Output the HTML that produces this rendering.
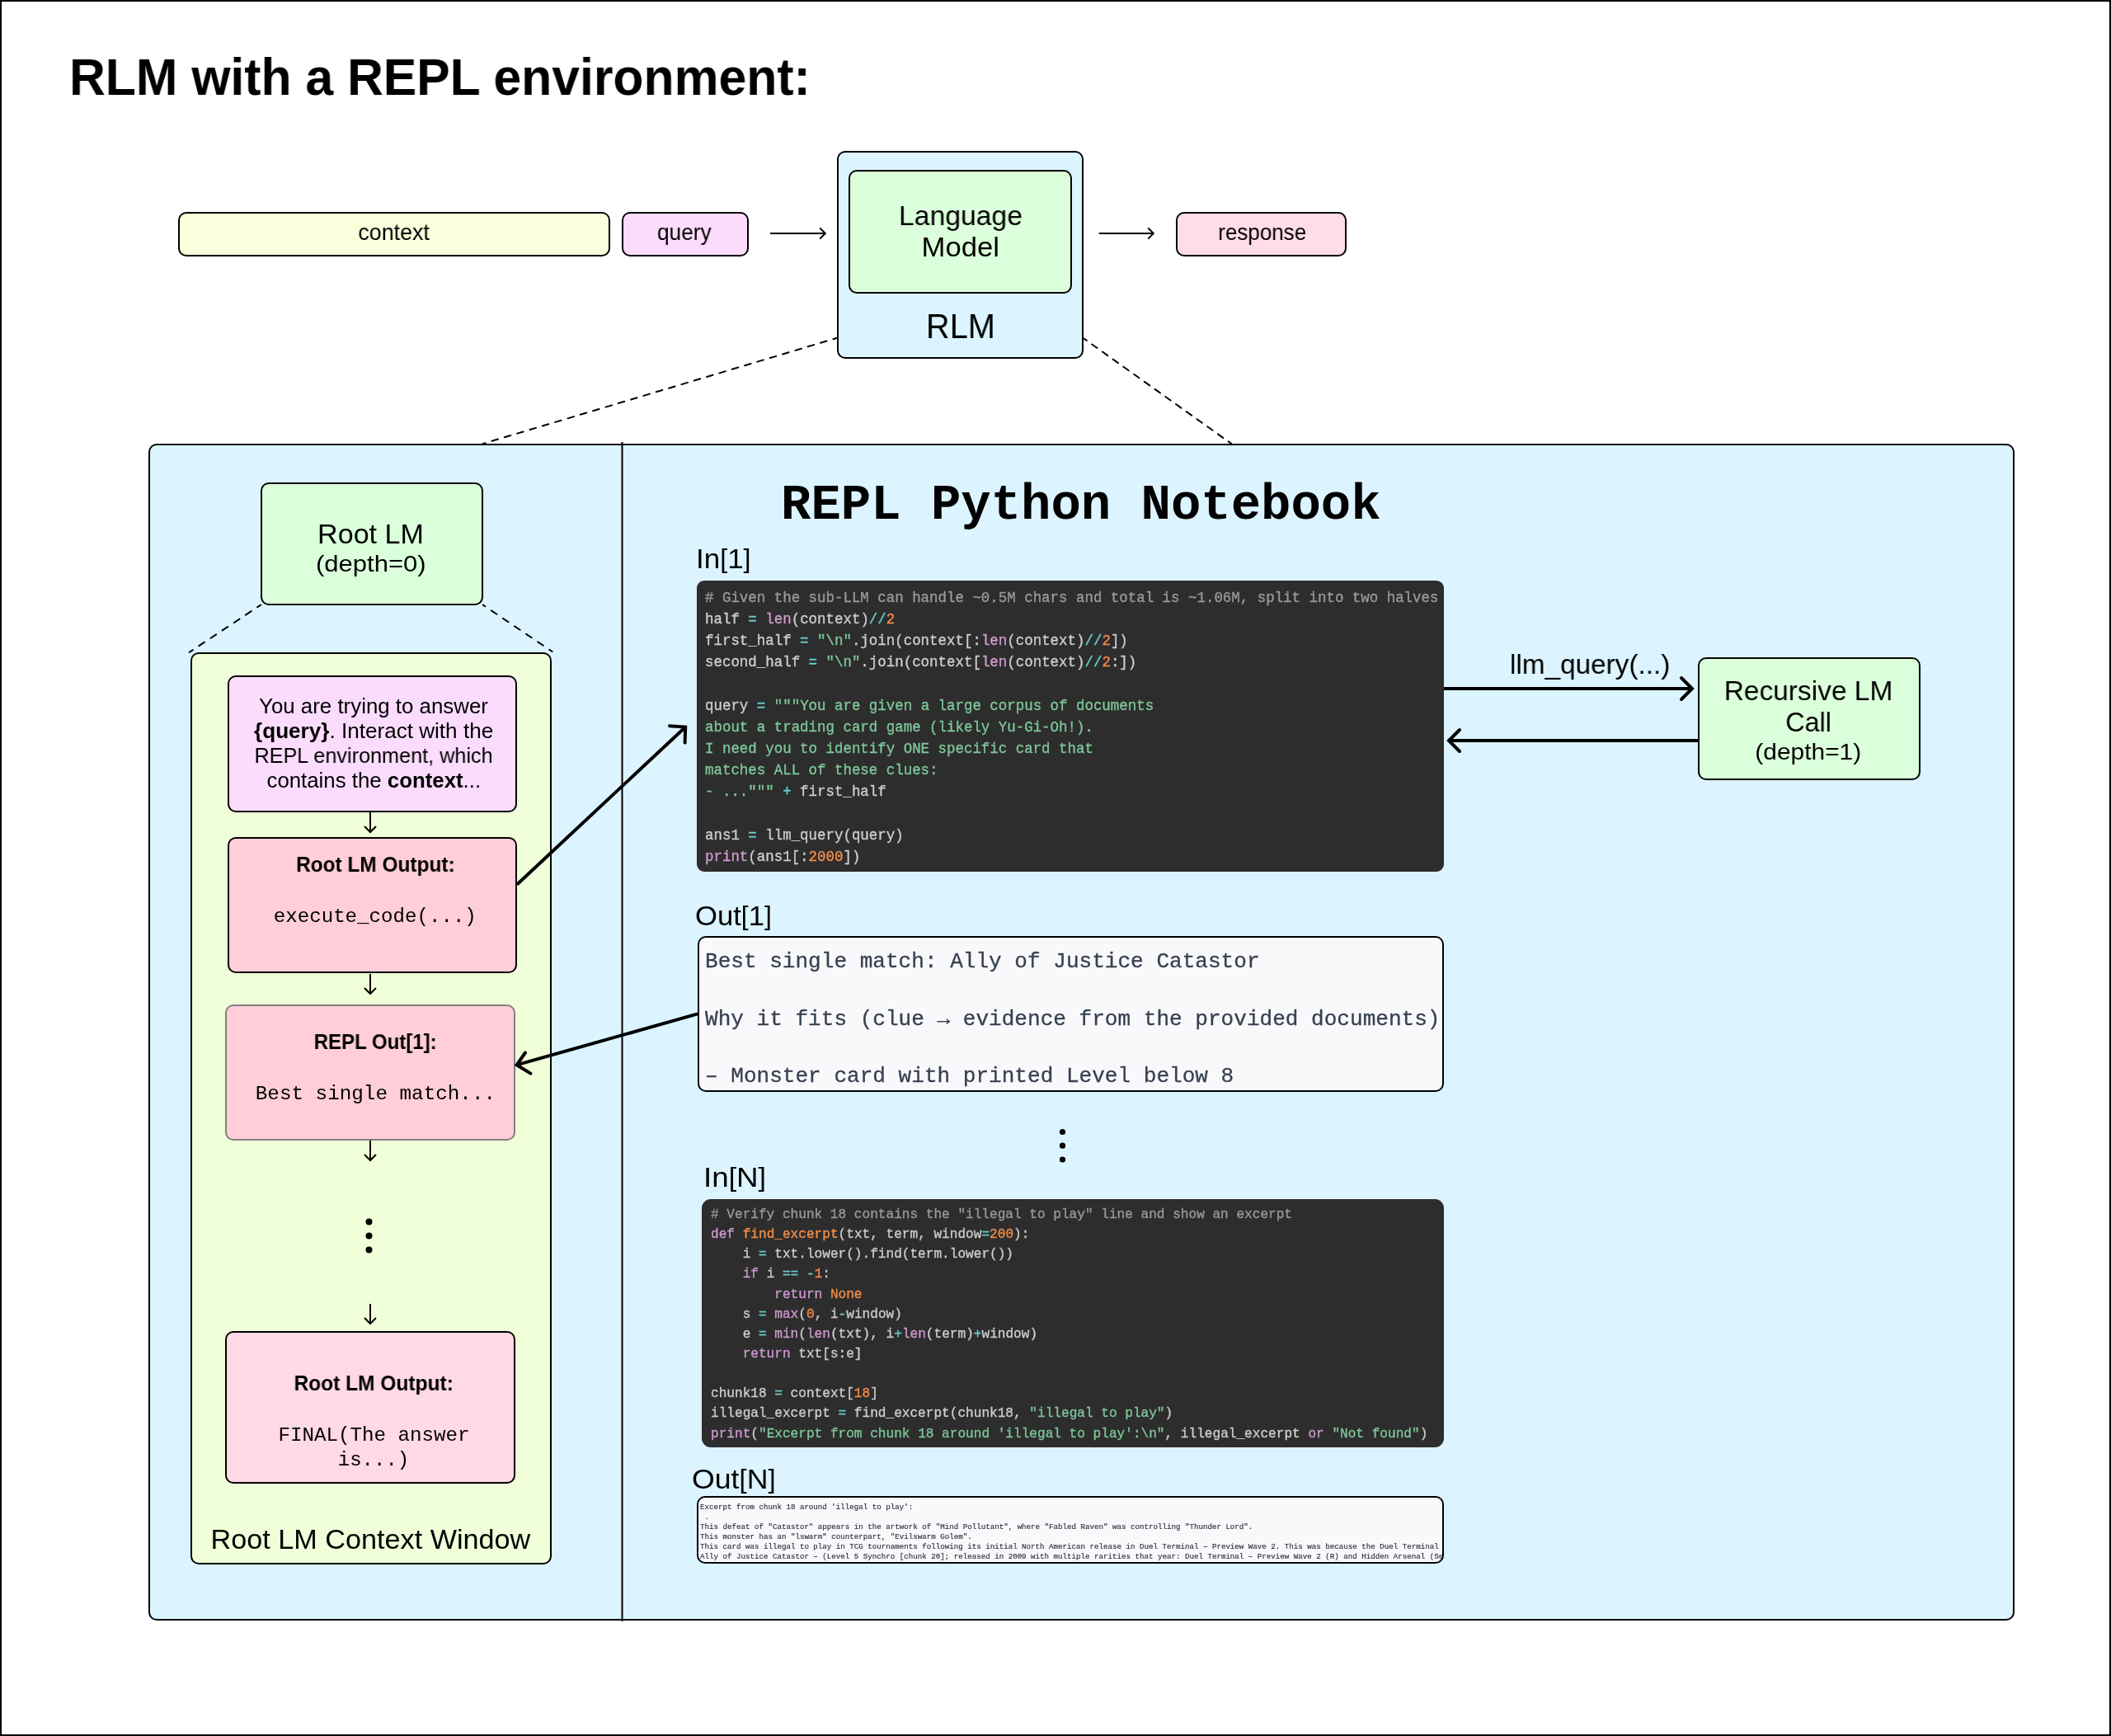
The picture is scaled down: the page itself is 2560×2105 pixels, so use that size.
<!DOCTYPE html>
<html>
<head>
<meta charset="utf-8">
<title>RLM with a REPL environment</title>
<style>
  html, body { margin: 0; padding: 0; }
  body {
    width: 2560px; height: 2105px; position: relative; overflow: hidden;
    background: #ffffff;
    font-family: "Liberation Sans", sans-serif; color: #000;
  }
  .abs { position: absolute; box-sizing: border-box; }
  .box { position: absolute; box-sizing: border-box; border: 2px solid #000; border-radius: 10px; }
  .ctr { display: flex; align-items: center; justify-content: center; text-align: center; }
  .txt { position: absolute; white-space: nowrap; line-height: 1; will-change: transform; }
  .txt.cc { text-align: center; transform-origin: 50% 50%; }
  .br { font-size: 0.92em; position: relative; top: -0.04em; }
  .mono { font-family: "Liberation Mono", monospace; }
  .blue { background: #dcf4ff; }
  .green { background: #dbffdb; }
  #frame { left: 0; top: 0; width: 2560px; height: 2105px; border: 2px solid #000; }
  pre { margin: 0; font-family: "Liberation Mono", monospace; will-change: transform; }
  .code { position: absolute; box-sizing: border-box; background: #2d2d2d; color: #cccccc; border-radius: 9px; overflow: hidden; }
  .code pre { position: absolute; white-space: pre; -webkit-text-stroke: 0.35px; }
  .c { color: #999999; } .k { color: #cc99cd; } .o { color: #67cdcc; }
  .n { color: #f08d49; } .s { color: #7ec699; }
  .out { position: absolute; box-sizing: border-box; background: #f9f9fc; border: 2px solid #000; border-radius: 10px; overflow: hidden; color: #374151; }
  .out pre { position: absolute; white-space: pre; -webkit-text-stroke: 0.3px; }
  svg { position: absolute; left: 0; top: 0; }
</style>
</head>
<body>
<div class="abs" id="frame"></div>

<!-- TITLE -->
<div class="txt" id="title" style="left:84.2px; top:62px; font-size:63.8px; font-weight:bold; transform-origin:0 50%; transform:scaleX(0.9508);">RLM with a REPL environment:</div>

<!-- TOP ROW -->
<div class="box" id="ctx" style="left:216px; top:257px; width:524px; height:54px; background:#faffdc;"></div>
<div class="txt cc" id="ctxt" style="left:216px; width:524px; top:267.85px; font-size:27.6px; transform:translateX(-0.4px) scaleX(0.9731);">context</div>
<div class="box" id="qry" style="left:754px; top:257px; width:154px; height:54px; background:#fbdcfd;"></div>
<div class="txt cc" id="qryt" style="left:754px; width:154px; top:267.85px; font-size:27.6px; transform:translateX(-1.2px) scaleX(0.9514);">query</div>
<div class="box blue" id="rlm" style="left:1015px; top:183px; width:299px; height:252px;"></div>
<div class="box green" id="lm" style="left:1029px; top:206px; width:271px; height:150px;"></div>
<div class="txt cc" id="lm1" style="left:1029px; width:271px; top:244.90px; font-size:33.8px; transform:translateX(0.5px) scaleX(0.9971);">Language</div>
<div class="txt cc" id="lm2" style="left:1029px; width:271px; top:283.4px; font-size:33.8px; transform:translateX(0.3px) scaleX(1.0260);">Model</div>
<div class="txt cc" id="rlmtxt" style="left:1015px; width:299px; top:374.90px; font-size:42.3px; transform:translateX(0.4px) scaleX(0.9373);">RLM</div>
<div class="box" id="resp" style="left:1426px; top:257px; width:207px; height:54px; background:#ffdde6;"></div>
<div class="txt cc" id="respt" style="left:1426px; width:207px; top:267.85px; font-size:27.6px; transform:translateX(1.2px) scaleX(0.9420);">response</div>

<!-- BIG PANEL -->
<div class="box blue" id="panel" style="left:180px; top:538px; width:2263px; height:1427px;"></div>

<!-- LEFT COLUMN -->
<div class="box green" id="rootlm" style="left:316px; top:585px; width:270px; height:149px;"></div>
<div class="txt cc" id="rootlm1" style="left:316px; width:270px; top:631px; font-size:33.8px; transform:translateX(-1.5px) scaleX(1.0083);">Root LM</div>
<div class="txt cc" id="rootlm2" style="left:316px; width:270px; top:669.7px; font-size:28px; transform:translateX(-1.2px) scaleX(1.108);">(depth=0)</div>

<div class="box" id="cw" style="left:231px; top:791px; width:438px; height:1106px; background:#f0ffd9;"></div>

<div class="box" id="prompt" style="left:276px; top:819px; width:351px; height:166px; background:#fbdcfd;"></div>
<div class="txt cc" id="p1" style="left:276px; width:350px; top:843.81px; font-size:25.4px; transform:translateX(2.0px) scaleX(1.0186);">You are trying to answer</div>
<div class="txt cc" id="p2" style="left:276px; width:350px; top:873.81px; font-size:25.4px; transform:translateX(2.1px) scaleX(1.0280);"><b>{query}</b>. Interact with the</div>
<div class="txt cc" id="p3" style="left:276px; width:350px; top:904.41px; font-size:25.4px; transform:translateX(2.0px) scaleX(0.9931);">REPL environment, which</div>
<div class="txt cc" id="p4" style="left:276px; width:350px; top:934.41px; font-size:25.4px; transform:translateX(2.3px) scaleX(1.0162);">contains the <b>context</b>...</div>

<div class="box" id="out1" style="left:276px; top:1015px; width:351px; height:165px; background:#ffced8;"></div>
<div class="txt cc" id="o1a" style="left:276px; width:350px; top:1036.11px; font-size:25.4px; font-weight:bold; transform:translateX(4.3px) scaleX(0.9619);">Root LM Output:</div>
<div class="txt cc mono" id="o1b" style="left:276px; width:350px; top:1099.9px; font-size:24px; transform:translateX(3.8px) scaleX(1.005);">execute_code(...)</div>

<div class="box" id="repl" style="left:273px; top:1218px; width:352px; height:165px; background:#ffced8; border-color:#808080;"></div>
<div class="txt cc" id="r1a" style="left:273px; width:352px; top:1250.71px; font-size:25.4px; font-weight:bold; transform:translateX(6.2px) scaleX(0.9458);">REPL Out[1]:</div>
<div class="txt cc mono" id="r1b" style="left:273px; width:352px; top:1314.6px; font-size:24px; transform:translateX(6.4px) scaleX(1.011);">Best single match...</div>

<div class="box" id="fin" style="left:273px; top:1614px; width:352px; height:185px; background:#ffd9e4;"></div>
<div class="txt cc" id="f1a" style="left:273px; width:352px; top:1664.61px; font-size:25.4px; font-weight:bold; transform:translateX(4.1px) scaleX(0.9657);">Root LM Output:</div>
<div class="txt cc mono" id="f1b" style="left:273px; width:352px; top:1728.8px; font-size:24px; transform:translateX(4.6px) scaleX(1.007);">FINAL(The answer</div>
<div class="txt cc mono" id="f1c" style="left:273px; width:352px; top:1758.9px; font-size:24px; transform:translateX(4.0px);">is...)</div>

<div class="txt cc" id="cwl" style="left:231px; width:438px; top:1849.9px; font-size:33.6px; transform:translateX(-0.6px) scaleX(1.0185);">Root LM Context Window</div>
<!-- RIGHT COLUMN -->
<div class="txt mono" id="nb" style="left:947px; top:583.3px; font-size:60.63px; font-weight:bold;">REPL Python Notebook</div>

<div class="txt" id="in1" style="left:844px; top:660.4px; font-size:34px; transform-origin:0 50%; transform:scaleX(1.0294);">In<span class="br">[</span>1<span class="br">]</span></div>
<div class="code" id="code1" style="left:845px; top:704px; width:906px; height:353px;">
<pre id="code1p" style="left:10px; top:8.4px; font-size:17.44px; line-height:26.15px;"><span class="c"># Given the sub-LLM can handle ~0.5M chars and total is ~1.06M, split into two halves</span>
half <span class="o">=</span> <span class="k">len</span>(context)<span class="o">//</span><span class="n">2</span>
first_half <span class="o">=</span> <span class="s">"\n"</span>.join(context[:<span class="k">len</span>(context)<span class="o">//</span><span class="n">2</span>])
second_half <span class="o">=</span> <span class="s">"\n"</span>.join(context[<span class="k">len</span>(context)<span class="o">//</span><span class="n">2</span>:])

query <span class="o">=</span> <span class="s">"""You are given a large corpus of documents
about a trading card game (likely Yu-Gi-Oh!).
I need you to identify ONE specific card that
matches ALL of these clues:
- ..."""</span> <span class="o">+</span> first_half

ans1 <span class="o">=</span> llm_query(query)
<span class="k">print</span>(ans1[:<span class="n">2000</span>])</pre>
</div>

<div class="txt" id="lq" style="left:1830.6px; top:788.68px; font-size:33.8px; transform-origin:0 50%; transform:scaleX(0.9856);">llm_query(...)</div>
<div class="box green" id="rec" style="left:2059px; top:797px; width:270px; height:149px;"></div>
<div class="txt cc" id="rec1" style="left:2059px; width:270px; top:820.88px; font-size:33.8px; transform:translateX(-1px) scaleX(0.9903);">Recursive LM</div>
<div class="txt cc" id="rec2" style="left:2059px; width:270px; top:859.28px; font-size:33.8px; transform:translateX(-0.9px) scaleX(0.9600);">Call</div>
<div class="txt cc" id="rec3" style="left:2059px; width:270px; top:897.9px; font-size:28px; transform:translateX(-1.2px) scaleX(1.068);">(depth=1)</div>

<div class="txt" id="out1l" style="left:843.3px; top:1093.4px; font-size:34px; transform-origin:0 50%; transform:scaleX(1.0191);">Out<span class="br">[</span>1<span class="br">]</span></div>
<div class="out" id="outb1" style="left:846px; top:1135px; width:905px; height:189px;">
<pre id="outb1p" style="left:7px; top:11.8px; font-size:26.07px; line-height:34.8px;">Best single match: Ally of Justice Catastor

Why it fits (clue → evidence from the provided documents)

– Monster card with printed Level below 8</pre>
</div>

<div class="txt" id="inN" style="left:852.6px; top:1410.4px; font-size:34px; transform-origin:0 50%; transform:scaleX(1.0809);">In<span class="br">[</span>N<span class="br">]</span></div>
<div class="code" id="code2" style="left:851px; top:1454px; width:900px; height:301px; border-radius:11px;">
<pre id="code2p" style="left:11px; top:7px; font-size:16.1px; line-height:24.14px;"><span class="c"># Verify chunk 18 contains the "illegal to play" line and show an excerpt</span>
<span class="k">def</span> <span class="n">find_excerpt</span>(txt, term, window<span class="o">=</span><span class="n">200</span>):
    i <span class="o">=</span> txt.lower().find(term.lower())
    <span class="k">if</span> i <span class="o">==</span> <span class="o">-</span><span class="n">1</span>:
        <span class="k">return</span> <span class="n">None</span>
    s <span class="o">=</span> <span class="k">max</span>(<span class="n">0</span>, i<span class="o">-</span>window)
    e <span class="o">=</span> <span class="k">min</span>(<span class="k">len</span>(txt), i<span class="o">+</span><span class="k">len</span>(term)<span class="o">+</span>window)
    <span class="k">return</span> txt[s:e]

chunk18 <span class="o">=</span> context[<span class="n">18</span>]
illegal_excerpt <span class="o">=</span> find_excerpt(chunk18, <span class="s">"illegal to play"</span>)
<span class="k">print</span>(<span class="s">"Excerpt from chunk 18 around 'illegal to play':\n"</span>, illegal_excerpt <span class="k">or</span> <span class="s">"Not found"</span>)</pre>
</div>

<div class="txt" id="outN" style="left:839px; top:1776.4px; font-size:34px; transform-origin:0 50%; transform:scaleX(1.0500);">Out<span class="br">[</span>N<span class="br">]</span></div>
<div class="out" id="outb2" style="left:845px; top:1814px; width:906px; height:82px;">
<pre id="outb2p" style="left:2.2px; top:5.5px; font-size:9.16px; line-height:12.1px; color:#2a2f3a; -webkit-text-stroke:0.15px;">Excerpt from chunk 18 around 'illegal to play':
 .
This defeat of "Catastor" appears in the artwork of "Mind Pollutant", where "Fabled Raven" was controlling "Thunder Lord".
This monster has an "lswarm" counterpart, "Evilswarm Golem".
This card was illegal to play in TCG tournaments following its initial North American release in Duel Terminal – Preview Wave 2. This was because the Duel Terminal
Ally of Justice Catastor – (Level 5 Synchro [chunk 20]; released in 2009 with multiple rarities that year: Duel Terminal – Preview Wave 2 (R) and Hidden Arsenal (Se</pre>
</div>
<!-- LINES / ARROWS -->
<svg width="2560" height="2105" viewBox="0 0 2560 2105" fill="none" stroke="#000" stroke-linecap="butt">
  <!-- divider -->
  <line x1="754.5" y1="536" x2="754.5" y2="1966" stroke-width="2"/>
  <!-- small top arrows -->
  <g stroke-width="2">
    <path d="M934 283 H1000.8 M994.2 276.4 L1000.8 283 L994.2 289.6"/>
    <path d="M1332.7 283 H1398.8 M1392.2 276.4 L1398.8 283 L1392.2 289.6"/>
  </g>
  <!-- dashed connectors -->
  <g stroke-width="2" stroke-linecap="round">
    <line x1="1015" y1="409.8" x2="585.8" y2="538" stroke-dasharray="7.8 8.2" stroke-dashoffset="3"/>
    <line x1="1314.4" y1="410.5" x2="1493.3" y2="538" stroke-dasharray="7.8 7.83" stroke-dashoffset="3.6"/>
    <line x1="316.1" y1="733.6" x2="229.7" y2="790.8" stroke-dasharray="8 9" stroke-dashoffset="3.3"/>
    <line x1="585.9" y1="733.6" x2="669.6" y2="790" stroke-dasharray="8 9" stroke-dashoffset="5"/>
  </g>
  <!-- small down arrows -->
  <g stroke-width="2">
    <path d="M449 984 V1009 M442 1002 L449 1009 L456 1002"/>
    <path d="M449 1181 V1205 M442 1198 L449 1205 L456 1198"/>
    <path d="M449 1383 V1407 M442 1400 L449 1407 L456 1400"/>
    <path d="M449 1581 V1605 M442 1598 L449 1605 L456 1598"/>
  </g>
  <!-- dots -->
  <g fill="#000" stroke="none">
    <circle cx="447.5" cy="1481.5" r="4"/><circle cx="447.5" cy="1498.5" r="4"/><circle cx="447.5" cy="1515.5" r="4"/>
    <circle cx="1288.5" cy="1372.5" r="3.6"/><circle cx="1288.5" cy="1389.2" r="3.6"/><circle cx="1288.5" cy="1406" r="3.6"/>
  </g>
  <!-- thick arrows -->
  <g stroke-width="4" stroke-linecap="square" stroke-linejoin="miter">
    <path d="M627 1072.5 L830.5 882.2" stroke-linecap="butt"/>
    <path d="M812 880.2 L831.2 881.5 L830.6 900.6" stroke-linecap="round"/>
    <path d="M846 1229.4 L628 1290.9" stroke-linecap="butt"/>
    <path d="M637 1276.5 L626.6 1291.3 L643.5 1301.6" stroke-linecap="round"/>
    <path d="M1751 835 H2050" stroke-linecap="butt"/>
    <path d="M2039 822 L2052 835 L2039 848" stroke-linecap="round"/>
    <path d="M2060 898 H1759" stroke-linecap="butt"/>
    <path d="M1770 885 L1757 898 L1770 911" stroke-linecap="round"/>
  </g>
</svg>
</body>
</html>
